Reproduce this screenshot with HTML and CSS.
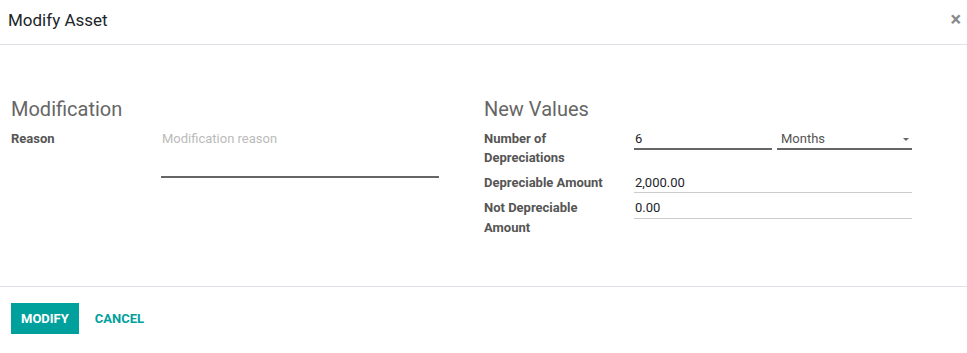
FILE: index.html
```html
<!DOCTYPE html>
<html>
<head>
  <meta charset="UTF-8">
  <title>Modify Asset</title>
  <link rel="stylesheet" href="styles.css">
</head>
<body>
  <div class="modal">
    <!-- Header -->
    <div class="modal-header">
      <h4 class="modal-title">Modify Asset</h4>
      <span class="close">×</span>
    </div>

    <!-- Body -->
    <div class="modal-body">
      <div class="group">
        <div class="group-title">Modification</div>
        <div class="row">
          <label class="field-label">Reason</label>
          <textarea class="field textarea focus" placeholder="Modification reason"></textarea>
        </div>
      </div>

      <div class="group">
        <div class="group-title">New Values</div>
        <div class="row">
          <label class="field-label">Number of Depreciations</label>
          <div class="field-pair">
            <input class="field focus num" value="6">
            <div class="field focus select">Months<span class="caret"></span></div>
          </div>
        </div>
        <div class="row">
          <label class="field-label">Depreciable Amount</label>
          <input class="field" value="2,000.00">
        </div>
        <div class="row">
          <label class="field-label">Not Depreciable Amount</label>
          <input class="field" value="0.00">
        </div>
      </div>
    </div>

    <!-- Footer -->
    <div class="modal-footer">
      <button class="btn btn-primary">MODIFY</button>
      <button class="btn btn-link">CANCEL</button>
    </div>
  </div>
</body>
</html>
```

FILE: styles.css
```css
body { margin: 0; font-family: Roboto, "Noto Sans", Arial, sans-serif; font-size: 13px; color: #212529; background: #fff; }

.modal-header { height: 44px; border-bottom: 1px solid #dee2e6; display: flex; align-items: center; justify-content: space-between; padding: 0 6px 0 8px; }
.modal-title { margin: 0; font-size: 17px; font-weight: 400; color: #212529; margin-top: -4px; }
.close { font-size: 20px; font-weight: 700; color: #8a8a8a; line-height: 1; margin-top: -6px; }

.modal-body { display: grid; grid-template-columns: 428px 428px; column-gap: 45px; padding: 52px 11px 0 11px; height: 189px; }
.group-title { font-size: 20px; line-height: 24px; color: #666; margin-bottom: 7.5px; }

.row { display: grid; grid-template-columns: 150px 1fr; line-height: 19.5px; padding-bottom: 5px; }
.field-label { font-weight: 700; color: #555; padding-right: 10px; }

.field { font-family: inherit; font-size: 13px; color: #212529; border: 0; border-bottom: 1px solid #ccc; padding: 0 0 0 1px; margin: 0; line-height: 19.5px; height: 19.5px; outline: none; background: transparent; box-sizing: content-box; width: auto; min-width: 0; }
.field.focus { border-bottom: 2px solid #666; }
.textarea { resize: none; height: 47px; padding-top: 0; }
.textarea::placeholder { color: #bbb; }

.field-pair { display: flex; gap: 5px; }
.field-pair .num { width: 137px; flex: none; }
.select { flex: 1; position: relative; padding-left: 4px; color: #555; }
.caret { position: absolute; right: 3px; top: 9px; border-left: 3px solid transparent; border-right: 3px solid transparent; border-top: 3px solid #666; }

.modal-footer { border-top: 1px solid #dee2e6; padding: 16px 11px; display: flex; gap: 6px; }
.btn { font-family: inherit; font-size: 13px; font-weight: 700; border: 0; height: 31px; padding: 0 10px; cursor: pointer; }
.btn-primary { background: #00a09d; color: #fff; }
.btn-link { background: transparent; color: #00a09d; }
```
